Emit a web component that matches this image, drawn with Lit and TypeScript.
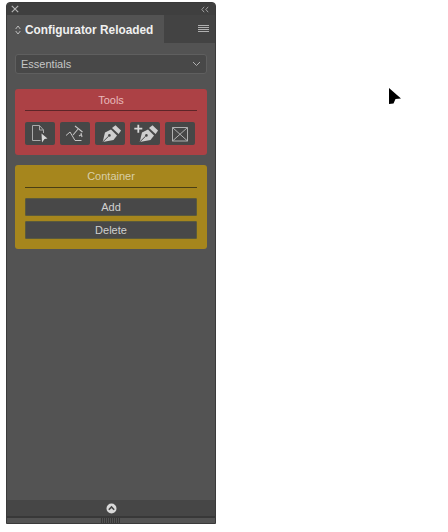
import { LitElement, html, css, svg } from "lit";
import { customElement } from "lit/decorators.js";

const pen = svg`<path d="M7.7 20 L10 10.5 L16 7.5 L22 13.5 L18.5 18 Z" fill="#cfcfcf"/><path d="M7.7 20 L13.6 14.2" stroke="#474747" stroke-width="1"/><circle cx="14.4" cy="13.4" r="1.3" fill="#474747"/><path d="M17 6 L20.5 3.2 L26 8.6 L23.6 12 Z" fill="#cfcfcf"/>`;

@customElement("app-root")
export class AppRoot extends LitElement {
  static styles = css`
    :host { display: block; width: 448px; height: 532px; background: #fff; position: relative; overflow: hidden;
      font-family: "Liberation Sans", Arial, sans-serif; }
    .panel { position: absolute; left: 6px; top: 2px; width: 210px; height: 522px; box-sizing: border-box;
      background: #535353; border: 1px solid #3a3a3a; border-radius: 4px 4px 0 0; display: flex; flex-direction: column; overflow: hidden; }
    .titlebar { height: 12px; background: #3f3f3f; display: flex; align-items: center; justify-content: space-between; padding: 0 6px 0 4px; flex: none; }
    .titlebar svg { display: block; }
    .tabs { height: 28px; background: #434343; display: flex; flex: none; }
    .tab { width: 157px; background: #535353; display: flex; align-items: center; padding: 2px 0 0 8px; box-sizing: border-box; gap: 4px;
      color: #f0f0f0; font-weight: 700; font-size: 11.85px; white-space: nowrap; }
    .tab-rest { flex: 1; display: flex; align-items: center; justify-content: flex-end; padding-right: 6px; }
    .body { flex: 1; padding: 11px 8px 0; display: flex; flex-direction: column; }
    .select { height: 20px; box-sizing: border-box; background: #484848; border: 1px solid #5f5f5f; border-radius: 3px;
      display: flex; align-items: center; justify-content: space-between; padding: 0 5px; color: #c6c6c6; font-size: 11px; }
    .card { border-radius: 3px; box-sizing: border-box; padding: 0 10px; display: flex; flex-direction: column; }
    .tools { background: #ac4145; height: 66px; margin-top: 15px; }
    .container { background: #a6861d; height: 84px; margin-top: 10px; }
    .card-title { height: 21px; line-height: 22px; text-align: center; font-size: 11px; border-bottom: 1px solid; flex: none; }
    .tools .card-title { color: #e8b9bb; border-color: #5e2528; }
    .container .card-title { color: #d9cfa8; border-color: #4a3e14; height: 22px; }
    .icons { display: flex; gap: 5px; margin-top: 11px; }
    .icon { width: 30px; height: 23px; background: #474747; border-radius: 2px; }
    .icon svg { display: block; }
    .btns { display: flex; flex-direction: column; gap: 5px; margin-top: 10px; }
    .btn { height: 18px; box-sizing: border-box; background: #484848; border: 1px solid #5a5a3c; border-radius: 1px; color: #d0d0d0;
      font-size: 11px; display: flex; align-items: center; justify-content: center; }
    .footer { height: 16px; background: #464646; flex: none; display: flex; align-items: center; justify-content: center; }
    .footer svg { display: block; }
    .grip { height: 7px; flex: none; background: #535353; border-top: 2px solid #383838; box-sizing: border-box; display: flex; justify-content: center; }
    .cursor { position: absolute; left: 388px; top: 87px; display: block; }
  `;

  render() {
    return html`
      <div class="panel">
        <div class="titlebar">
          <svg width="8" height="8" viewBox="0 0 8 8"><path d="M.8.8 L7.2 7.2 M7.2.8 L.8 7.2" stroke="#b4b4b4" stroke-width="1.2"/></svg>
          <svg width="8" height="7" viewBox="0 0 8 7"><path d="M3.2 .8 L.8 3.5 L3.2 6.2 M7.2 .8 L4.8 3.5 L7.2 6.2" fill="none" stroke="#a0a0a0" stroke-width="1"/></svg>
        </div>
        <div class="tabs">
          <div class="tab">
            <svg width="6" height="10" viewBox="0 0 6 10"><path d="M.7 4 L3 1 L5.3 4 M.7 6 L3 9 L5.3 6" fill="none" stroke="#bdbdbd" stroke-width="1"/></svg>
            <span>Configurator Reloaded</span>
          </div>
          <div class="tab-rest">
            <svg width="11" height="8" viewBox="0 0 11 8"><path d="M0 .5H11M0 2.5H11M0 4.5H11M0 6.5H11" stroke="#b0b0b0" stroke-width="1"/></svg>
          </div>
        </div>
        <div class="body">
          <div class="select">
            <span>Essentials</span>
            <svg width="9" height="6" viewBox="0 0 9 6"><path d="M1 1 L4.5 4.5 L8 1" fill="none" stroke="#b0b0b0" stroke-width="1"/></svg>
          </div>
          <div class="card tools">
            <div class="card-title">Tools</div>
            <div class="icons">
              <div class="icon"><svg width="30" height="23" viewBox="0 0 30 23"><path d="M15.5 18.5 H7.5 V3.5 H14.5 L18.5 8 V11 M14.5 3.5 V8 H18.5" fill="none" stroke="#aaa" stroke-width="1"/><path d="M16.5 11.5 L22.5 16.5 L19.5 17 L17 20.5 Z" fill="#d8d8d8"/></svg></div>
              <div class="icon"><svg width="30" height="23" viewBox="0 0 30 23"><path d="M6 13.5 L10 10 L15 18.5 L21.5 18.5" fill="none" stroke="#c4c4c4" stroke-width="1"/><path d="M13 13 L18.5 6.5 M15 4 L22.5 10 M19 14 L21.5 12.5 M21 11 L22 15" fill="none" stroke="#c4c4c4" stroke-width="1.1"/></svg></div>
              <div class="icon"><svg width="30" height="23" viewBox="0 0 30 23">${pen}</svg></div>
              <div class="icon"><svg width="30" height="23" viewBox="0 0 30 23"><path d="M4.3 6.7 H12.3 M8.3 2.7 V10.7" stroke="#d8d8d8" stroke-width="1.8"/><g transform="translate(2,0)">${pen}</g></svg></div>
              <div class="icon"><svg width="30" height="23" viewBox="0 0 30 23"><path d="M7.5 5.5 H22.5 V19 H7.5 Z M7.5 5.5 L22.5 19 M22.5 5.5 L7.5 19" fill="none" stroke="#b0b0b0" stroke-width="1"/></svg></div>
            </div>
          </div>
          <div class="card container">
            <div class="card-title">Container</div>
            <div class="btns">
              <div class="btn">Add</div>
              <div class="btn">Delete</div>
            </div>
          </div>
        </div>
        <div class="footer">
          <svg width="11" height="11" viewBox="0 0 11 11"><circle cx="5.5" cy="5.5" r="5" fill="#d9d9d9"/><path d="M2.8 6.8 L5.5 4 L8.2 6.8" fill="none" stroke="#464646" stroke-width="1.6"/></svg>
        </div>
        <div class="grip">
          <svg width="20" height="5" viewBox="0 0 20 5"><path d="M.5 0V5M2.5 0V5M4.5 0V5M6.5 0V5M8.5 0V5M10.5 0V5M12.5 0V5M14.5 0V5M16.5 0V5M18.5 0V5" stroke="#383838" stroke-width="1"/></svg>
        </div>
      </div>
      <svg class="cursor" width="14" height="19" viewBox="0 0 14 19"><path d="M1 1 L13 11.5 L7.5 12 L5.5 16.5 L1 17 Z" fill="#000"/></svg>
    `;
  }
}
